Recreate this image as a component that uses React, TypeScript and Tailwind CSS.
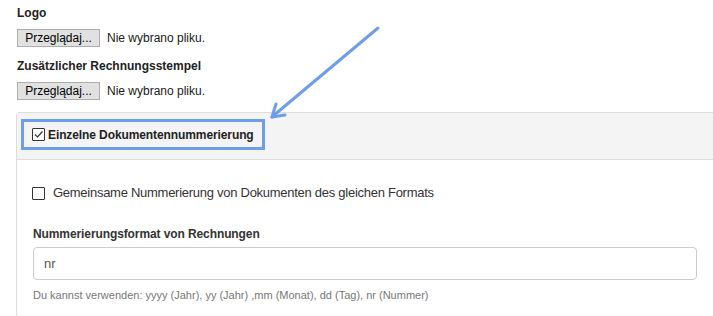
import React from 'react';

const font = { fontFamily: '"Liberation Sans", Arial, sans-serif' };

function FileRow() {
    return (
        <div className="flex items-center h-[18px] pl-px">
            <button className="h-[18px] w-[83px] bg-[#e1e1e1] border border-[#adadad] text-[12px] text-black leading-none">
                Przeglądaj...
            </button>
            <span className="ml-[7px] text-[12px] text-[#1a1a1a]">Nie wybrano pliku.</span>
        </div>
    );
}

function Box({ checked }: { checked?: boolean }) {
    return (
        <span className="inline-flex items-center justify-center w-[13px] h-[13px] border border-[#333] bg-white rounded-[1px] shrink-0">
            {checked && (
                <svg width="11" height="11" viewBox="0 0 11 11">
                    <path d="M2 5.5 L4.5 8 L9.5 2.5" fill="none" stroke="#333" strokeWidth="1.2" />
                </svg>
            )}
        </span>
    );
}

export default function App() {
    return (
        <div className="relative w-[713px] h-[316px] overflow-hidden bg-white pl-[16px] pt-[5px]" style={font}>
            {/* upload fields */}
            <div className="pl-px h-[16px] leading-[16px] text-[12px] font-bold text-[#222]">Logo</div>
            <div className="mt-[8px]"><FileRow /></div>
            <div className="mt-[11px] pl-px h-[16px] leading-[16px] text-[12px] font-bold text-[#222]">Zusätzlicher Rechnungsstempel</div>
            <div className="mt-[8px]"><FileRow /></div>

            {/* numbering panel */}
            <div className="mt-[12px] border-l border-t border-[#dddddd] rounded-tl-[4px]">
                <div className="h-[47px] bg-[#f4f4f4] border-b border-[#dddddd] pl-[4px] pt-[6px]">
                    <div className="w-[244px] h-[31px] border-[3px] border-[#6d9eeb] flex items-center pl-[8px] gap-[3px]">
                        <Box checked />
                        <span className="text-[12px] font-bold text-[#222] tracking-[-0.1px]">Einzelne Dokumentennummerierung</span>
                    </div>
                </div>
                <div className="pl-[16px] pt-[23px] pb-[20px]">
                    <div className="flex items-center h-[20px] -ml-px gap-[8px]">
                        <Box />
                        <span className="text-[13px] text-[#333] tracking-[-0.27px]">Gemeinsame Nummerierung von Dokumenten des gleichen Formats</span>
                    </div>
                    <div className="mt-[23px] h-[16px] leading-[16px] text-[12px] font-bold text-[#333] tracking-[-0.1px]">
                        Nummerierungsformat von Rechnungen
                    </div>
                    <div className="mt-[5px] w-[664px] h-[33px] border border-[#cccccc] rounded-[4px] flex items-center pl-[10px] text-[13px] text-[#555]">
                        nr
                    </div>
                    <div className="mt-[8px] h-[14px] leading-[14px] text-[11px] text-[#777]">
                        Du kannst verwenden: yyyy (Jahr), yy (Jahr) ,mm (Monat), dd (Tag), nr (Nummer)
                    </div>
                </div>
            </div>

            {/* annotation arrow */}
            <svg className="absolute left-0 top-0 pointer-events-none" width="713" height="316">
                <g stroke="#6d9eeb" strokeWidth="3" strokeLinecap="round" fill="none">
                    <line x1="378" y1="28" x2="273" y2="116" />
                    <line x1="272" y1="117" x2="276" y2="104" />
                    <line x1="272" y1="117" x2="285" y2="115" />
                </g>
            </svg>
        </div>
    );
}
